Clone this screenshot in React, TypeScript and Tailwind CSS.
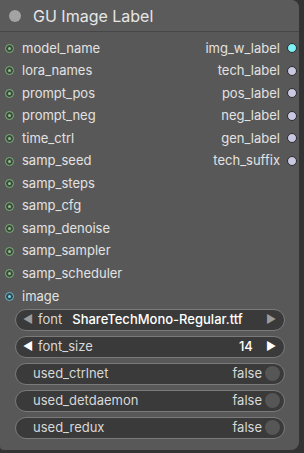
import React from "react";

const inputs = [
  "model_name",
  "lora_names",
  "prompt_pos",
  "prompt_neg",
  "time_ctrl",
  "samp_seed",
  "samp_steps",
  "samp_cfg",
  "samp_denoise",
  "samp_sampler",
  "samp_scheduler",
  "image",
];
const outputs = ["img_w_label", "tech_label", "pos_label", "neg_label", "gen_label", "tech_suffix"];

function InDot({ blue }: { blue?: boolean }) {
  return (
    <span
      className={
        "w-[9px] h-[9px] rounded-full border-[1.5px] flex items-center justify-center " +
        (blue ? "border-[#6fb6c8] bg-[#2f4a50]" : "border-[#7fb27f] bg-[#3c4a3c]")
      }
    >
      <span className={"w-[3px] h-[3px] rounded-full " + (blue ? "bg-[#7fd0e0]" : "bg-[#8fc08f]")} />
    </span>
  );
}

function OutDot({ cyan }: { cyan?: boolean }) {
  return (
    <span
      className={
        "w-[10px] h-[10px] rounded-full border border-[#2a2a2a] " + (cyan ? "bg-[#7ef2f7]" : "bg-[#c9c8e2]")
      }
    />
  );
}

function Toggle({ label }: { label: string }) {
  return (
    <div className="h-[22px] rounded-full border border-[#7a7a7a] bg-[#3a3a3a] flex items-center pl-[17px] pr-[4px]">
      <span className="text-[13px] text-[#d8d8d8] flex-1">{label}</span>
      <span className="text-[13px] text-[#d8d8d8] mr-[3px]">false</span>
      <span className="w-[15px] h-[15px] rounded-full bg-[#565656]" />
    </div>
  );
}

export default function App() {
  return (
    <div
      className="w-[304px] h-[453px] bg-[#333333] overflow-hidden"
      style={{ fontFamily: "Inter, 'Liberation Sans', sans-serif" }}
    >
      <div className="w-[299px] h-[450px] bg-[#585858] rounded-tr-[8px] rounded-br-[8px] rounded-bl-[4px] flex flex-col">
        <div className="h-[32px] flex items-center border-b border-[#464646] bg-[#5b5b5b] rounded-tr-[8px]">
          <span className="w-[12px] h-[12px] rounded-full bg-[#a3a3a3] ml-[9px]" />
          <span className="ml-[12px] text-[16px] text-[#e6e6e6] leading-none">GU Image Label</span>
        </div>
        <div className="flex pt-[5px]">
          <div className="flex flex-col flex-1">
            {inputs.map((n, i) => (
              <div key={n} className="h-[22.55px] flex items-center pl-[5px] gap-[8px]">
                <InDot blue={i === inputs.length - 1} />
                <span className="text-[13px] text-[#e2e2e2]">{n}</span>
              </div>
            ))}
          </div>
          <div className="flex flex-col">
            {outputs.map((n, i) => (
              <div key={n} className="h-[22.55px] flex items-center justify-end pr-[2px] gap-[7px]">
                <span className="text-[13px] text-[#e2e2e2]">{n}</span>
                <OutDot cyan={i === 0} />
              </div>
            ))}
          </div>
        </div>
        <div className="flex flex-col gap-[5px] pl-[15px] pr-[14px] mt-[1px]">
          <div className="h-[22px] rounded-full border border-[#7a7a7a] bg-[#3a3a3a] flex items-center pl-[7px] pr-[8px]">
            <span className="text-[#9c9c9c] text-[11px] leading-none">◀</span>
            <span className="text-[13px] text-[#d8d8d8] ml-[5px]">font</span>
            <span className="text-[13px] text-white ml-[10px] flex-1 font-medium">ShareTechMono-Regular.ttf</span>
            <span className="text-[#9c9c9c] text-[11px] leading-none">▶</span>
          </div>
          <div className="h-[22px] rounded-full border border-[#7a7a7a] bg-[#3a3a3a] flex items-center pl-[7px] pr-[8px]">
            <span className="text-white text-[11px] leading-none">◀</span>
            <span className="text-[13px] text-[#d8d8d8] ml-[5px] flex-1">font_size</span>
            <span className="text-[13px] text-white mr-[13px] font-medium">14</span>
            <span className="text-white text-[11px] leading-none">▶</span>
          </div>
          <Toggle label="used_ctrlnet" />
          <Toggle label="used_detdaemon" />
          <Toggle label="used_redux" />
        </div>
      </div>
    </div>
  );
}
